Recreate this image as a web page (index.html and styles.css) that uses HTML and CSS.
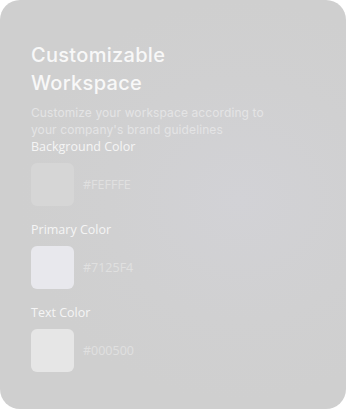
FILE: index.html
```html
<!DOCTYPE html>
<html lang="en">
<head>
<meta charset="utf-8">
<title>Customizable Workspace</title>
<link rel="stylesheet" href="styles.css">
</head>
<body>
<section class="card">
  <h1 class="title">Customizable<br>Workspace</h1>
  <p class="subtitle">Customize your workspace according to your company's brand guidelines</p>
  <div class="field">
    <div class="label">Background Color</div>
    <div class="row">
      <div class="swatch swatch-bg"></div>
      <span class="hex">#FEFFFE</span>
    </div>
  </div>
  <div class="field">
    <div class="label">Primary Color</div>
    <div class="row">
      <div class="swatch swatch-primary"></div>
      <span class="hex">#7125F4</span>
    </div>
  </div>
  <div class="field">
    <div class="label">Text Color</div>
    <div class="row">
      <div class="swatch swatch-text"></div>
      <span class="hex">#000500</span>
    </div>
  </div>
</section>
</body>
</html>
```

FILE: styles.css
```css
html, body {
  margin: 0;
  padding: 0;
  background: #ffffff;
}

.card {
  box-sizing: border-box;
  width: 346px;
  height: 409px;
  border-radius: 20px;
  padding: 41px 31px 0 31px;
  background: radial-gradient(ellipse 220px 200px at 240px 200px, #d2d2d6 0%, #d0d0d1 60%, #cfcfcf 100%);
  background-color: #cfcfcf;
  display: flex;
  flex-direction: column;
  font-family: "Open Sans", "Liberation Sans", sans-serif;
}

.title {
  margin: 0;
  font-family: Inter, "Open Sans", sans-serif;
  font-weight: 500;
  font-size: 20px;
  line-height: 28px;
  letter-spacing: 0.3px;
  color: #f8f8f8;
}

.subtitle {
  margin: 7px 0 0 0;
  font-family: Inter, "Open Sans", sans-serif;
  font-size: 12px;
  line-height: 17px;
  letter-spacing: 0.1px;
  color: #e4e4e5;
  width: 245px;
}

.field {
  display: flex;
  flex-direction: column;
  gap: 7.5px;
}

.field + .field {
  margin-top: 15.5px;
}

.label {
  font-size: 12.5px;
  line-height: 17px;
  color: #f5f5f5;
}

.row {
  display: flex;
  align-items: center;
  gap: 9px;
}

.swatch {
  width: 43px;
  height: 43px;
  border-radius: 6px;
}

.swatch-bg { background: #d6d6d6; }
.swatch-primary { background: #e8e8ed; }
.swatch-text { background: #e6e6e6; }

.hex {
  font-size: 12.5px;
  color: #e0e0e0;
}
```
